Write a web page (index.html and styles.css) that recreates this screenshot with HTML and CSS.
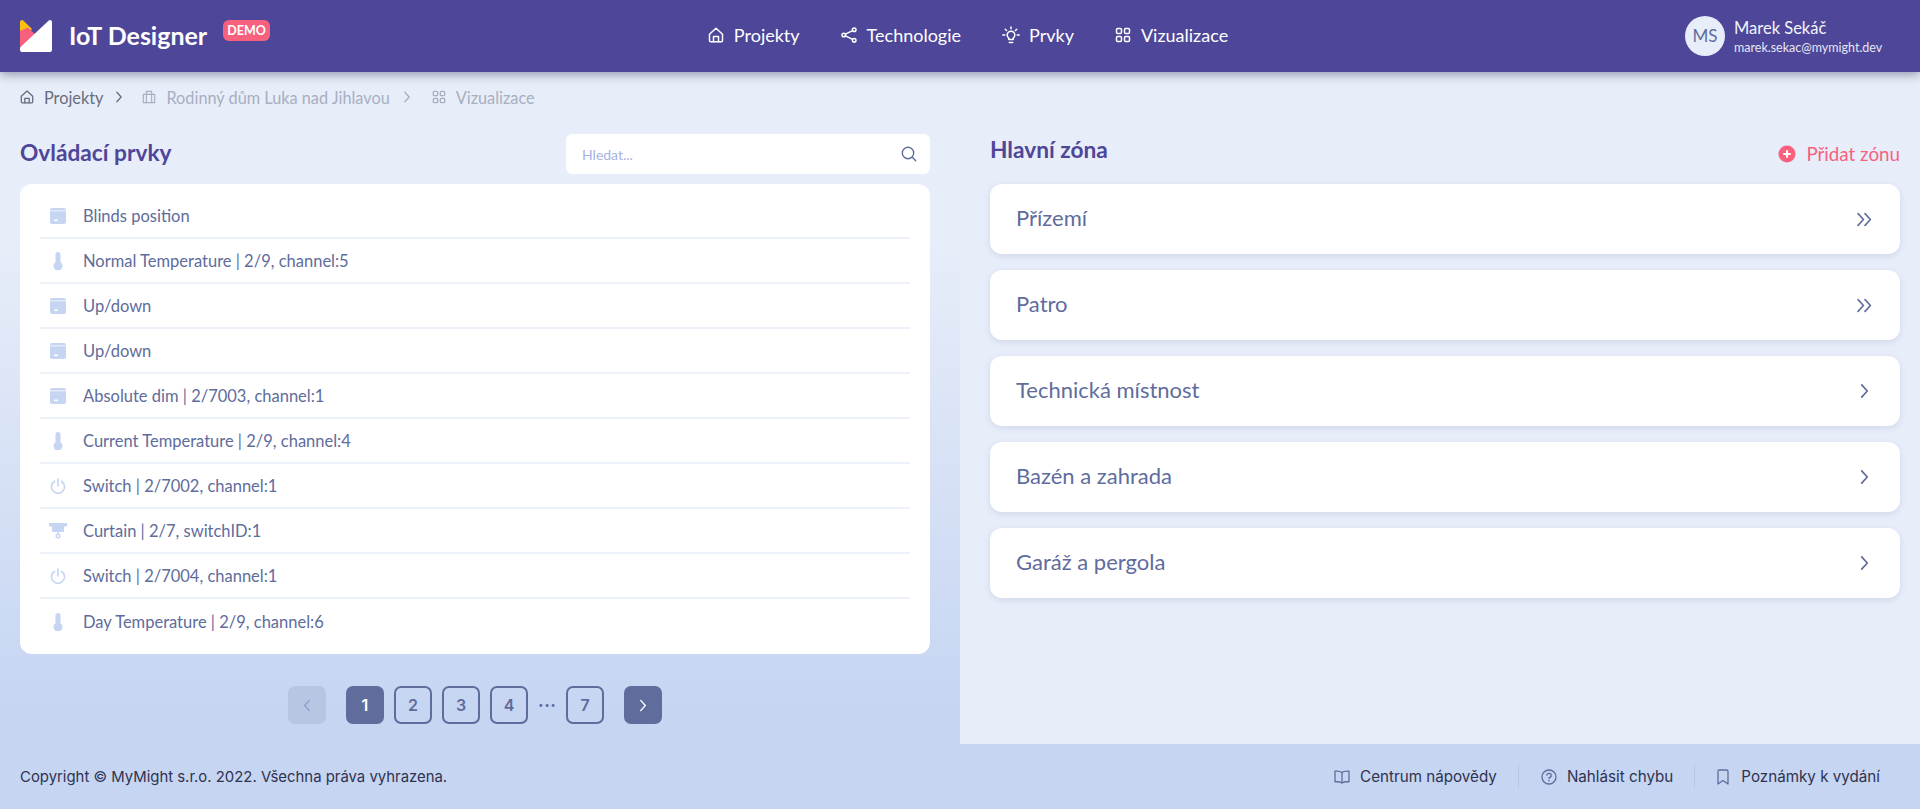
FILE: index.html
```html
<!DOCTYPE html>
<html lang="cs">

<head>
    <meta charset="UTF-8" />
    <meta name="viewport" content="width=device-width, initial-scale=1.0" />
    <title>IoT Designer</title>
    <link rel="stylesheet" href="styles.css">
</head>

<body>
    <svg class="icon-defs" width="0" height="0">
        <symbol id="i-home" viewBox="0 0 16 16">
            <path d="M1.500 7.200 8 1.200l6.500 6v6.300a1.300 1.300 0 0 1-1.300 1.300H2.800a1.300 1.300 0 0 1-1.300-1.300z" />
            <path d="M5.500 14.800V9.500h5v5.300" />
        </symbol>
        <symbol id="i-grid" viewBox="0 0 16 16">
            <rect x="1.500" y="1.500" width="5" height="5" rx="1.200" />
            <rect x="9.500" y="1.500" width="5" height="5" rx="1.200" />
            <rect x="1.500" y="9.500" width="5" height="5" rx="1.200" />
            <rect x="9.500" y="9.500" width="5" height="5" rx="1.200" />
        </symbol>
        <symbol id="i-share" viewBox="0 0 16 16">
            <circle cx="2.800" cy="8" r="1.800" />
            <circle cx="13.200" cy="2.800" r="1.800" />
            <circle cx="13.200" cy="13.200" r="1.800" />
            <path d="M4.400 7.200 11.600 3.600M4.400 8.800l7.200 3.600" />
        </symbol>
        <symbol id="i-bulb" viewBox="0 0 18 18">
            <path d="M6.800 12.200C5.800 11.400 5.200 10.300 5.200 9a3.800 3.800 0 0 1 7.600 0c0 1.300-.6 2.400-1.600 3.200v1.300H6.800z" />
            <path d="M7.300 16.500h3.400M9 1v1.800M3.300 3.300l1.200 1.200M14.700 3.300l-1.200 1.200M.8 9h2M15.200 9h2" />
        </symbol>
        <symbol id="i-chevron" viewBox="0 0 8 14">
            <path d="m1.500 1.500 5 5.500-5 5.500" />
        </symbol>
        <symbol id="i-double" viewBox="0 0 14 14">
            <path d="m1 1.500 5 5.500-5 5.500M7.500 1.500l5 5.500-5 5.500" />
        </symbol>
        <symbol id="i-window" viewBox="0 0 16 16">
            <path class="fill" fill-rule="evenodd" d="M2 0h12a2 2 0 0 1 2 2v12a2 2 0 0 1-2 2H2a2 2 0 0 1-2-2V2a2 2 0 0 1 2-2zM0 2.500v.8h16v-.8zM4 11.500v1.500h4v-1.500z" />
        </symbol>
        <symbol id="i-thermo" viewBox="0 0 10 18">
            <path class="fill" d="M2.500 2.500a2.500 2.500 0 0 1 5 0v7.700a4.500 4.500 0 1 1-5 0z" />
        </symbol>
        <symbol id="i-power" viewBox="0 0 16 16">
            <path class="thick" d="M4.600 3.300a6.500 6.500 0 1 0 6.800 0M8 1v7" />
        </symbol>
        <symbol id="i-curtain" viewBox="0 0 18 16">
            <path class="fill" d="M0 0h18v3.500h-3V9H3V3.500H0z" />
            <path class="line" d="M9 9v2" />
            <circle class="line" cx="9" cy="13" r="1.800" />
        </symbol>
    </svg>

    <header class="topbar">
        <div class="brand">
            <svg class="logo" viewBox="0 0 32 32">
                <path d="M0 2a2 2 0 0 1 3.300-1.400L12 9 0 21z" fill="#fdc010" />
                <path d="M0 11 8 7.500 17 16 0 27z" fill="#f8617e" />
                <path d="M30 0a2 2 0 0 1 2 2v28a2 2 0 0 1-2 2H2a2 2 0 0 1-2-2v-2.500L28.500.7A2 2 0 0 1 30 0z" fill="#fff" />
            </svg>
            <span class="brand-name">IoT Designer</span>
            <span class="badge">DEMO</span>
        </div>
        <nav class="nav">
            <a class="nav-item"><svg class="icon"><use href="#i-home" /></svg>Projekty</a>
            <a class="nav-item"><svg class="icon"><use href="#i-share" /></svg>Technologie</a>
            <a class="nav-item"><svg class="icon icon-bulb"><use href="#i-bulb" /></svg>Prvky</a>
            <a class="nav-item"><svg class="icon"><use href="#i-grid" /></svg>Vizualizace</a>
        </nav>
        <div class="user">
            <div class="avatar">MS</div>
            <div>
                <div class="user-name">Marek Sekáč</div>
                <div class="user-mail">marek.sekac@mymight.dev</div>
            </div>
        </div>
    </header>

    <div class="content">
        <section class="left">
            <div class="breadcrumb">
                <span class="crumb crumb-active"><svg class="icon-sm"><use href="#i-home" /></svg>Projekty</span>
                <svg class="crumb-sep crumb-sep-active"><use href="#i-chevron" /></svg>
                <span class="crumb">
                    <svg class="icon-sm" viewBox="0 0 16 16">
                        <path d="M1.500 5h13v9.500h-13zM5 5V1.500h6V5M5 5v9.500M11 5v9.500" />
                    </svg>Rodinný dům Luka nad Jihlavou</span>
                <svg class="crumb-sep crumb-sep-last"><use href="#i-chevron" /></svg>
                <span class="crumb"><svg class="icon-sm"><use href="#i-grid" /></svg>Vizualizace</span>
            </div>

            <div class="list-head">
                <h2 class="title title-list">Ovládací prvky</h2>
                <div class="search">
                    <span>Hledat...</span>
                    <svg viewBox="0 0 16 16" class="search-icon">
                        <circle cx="7" cy="7" r="5.700" />
                        <path d="m11.300 11.300 3.400 3.400" />
                    </svg>
                </div>
            </div>

            <ul class="controls">
                <li><span class="ctrl-icon"><svg class="i-window"><use href="#i-window" /></svg></span>Blinds position</li>
                <li><span class="ctrl-icon"><svg class="i-thermo"><use href="#i-thermo" /></svg></span>Normal Temperature | 2/9, channel:5</li>
                <li><span class="ctrl-icon"><svg class="i-window"><use href="#i-window" /></svg></span>Up/down</li>
                <li><span class="ctrl-icon"><svg class="i-window"><use href="#i-window" /></svg></span>Up/down</li>
                <li><span class="ctrl-icon"><svg class="i-window"><use href="#i-window" /></svg></span>Absolute dim | 2/7003, channel:1</li>
                <li><span class="ctrl-icon"><svg class="i-thermo"><use href="#i-thermo" /></svg></span>Current Temperature | 2/9, channel:4</li>
                <li><span class="ctrl-icon"><svg class="i-power"><use href="#i-power" /></svg></span>Switch | 2/7002, channel:1</li>
                <li><span class="ctrl-icon"><svg class="i-curtain"><use href="#i-curtain" /></svg></span>Curtain | 2/7, switchID:1</li>
                <li><span class="ctrl-icon"><svg class="i-power"><use href="#i-power" /></svg></span>Switch | 2/7004, channel:1</li>
                <li><span class="ctrl-icon"><svg class="i-thermo"><use href="#i-thermo" /></svg></span>Day Temperature | 2/9, channel:6</li>
            </ul>

            <div class="pager">
                <span class="page page-disabled"><svg class="page-arrow"><use href="#i-chevron" /></svg></span>
                <div class="pages">
                    <span class="page page-on">1</span>
                    <span class="page">2</span>
                    <span class="page">3</span>
                    <span class="page">4</span>
                    <span class="dots">...</span>
                    <span class="page">7</span>
                </div>
                <span class="page page-on"><svg class="page-arrow"><use href="#i-chevron" /></svg></span>
            </div>
        </section>

        <section class="right">
            <div class="zone-head">
                <h2 class="title title-zone">Hlavní zóna</h2>
                <a class="add-zone">
                    <svg class="add-icon" viewBox="0 0 18 18">
                        <circle cx="9" cy="9" r="8.500" fill="#f8617e" />
                        <path d="M9 6v6M6 9h6" stroke="#fff" stroke-width="2" stroke-linecap="round" />
                    </svg>Přidat zónu</a>
            </div>
            <div class="zone"><span class="zone-name">Přízemí</span><svg class="zone-double"><use href="#i-double" /></svg></div>
            <div class="zone"><span class="zone-name">Patro</span><svg class="zone-double"><use href="#i-double" /></svg></div>
            <div class="zone"><span class="zone-name">Technická místnost</span><svg class="zone-arrow"><use href="#i-chevron" /></svg></div>
            <div class="zone"><span class="zone-name">Bazén a zahrada</span><svg class="zone-arrow"><use href="#i-chevron" /></svg></div>
            <div class="zone"><span class="zone-name">Garáž a pergola</span><svg class="zone-arrow"><use href="#i-chevron" /></svg></div>
        </section>
    </div>

    <footer class="footer">
        <span>Copyright © MyMight s.r.o. 2022. Všechna práva vyhrazena.</span>
        <div class="foot-links">
            <a class="foot-link">
                <svg class="foot-icon" viewBox="0 0 16 14">
                    <path d="M8 2.500C6.500 1.300 4 1 1 1.200v10.600c3-.2 5.500.1 7 1.200 1.500-1.100 4-1.400 7-1.200V1.200C12 1 9.500 1.300 8 2.500zM8 2.500V13" />
                </svg>Centrum nápovědy</a>
            <a class="foot-link">
                <svg class="foot-icon" viewBox="0 0 16 16">
                    <circle cx="8" cy="8" r="7" />
                    <path d="M5.800 6.200A2.200 2.200 0 1 1 8 8.700v.9M8 11.300v.7" />
                </svg>Nahlásit chybu</a>
            <a class="foot-link">
                <svg class="foot-icon foot-icon-mark" viewBox="0 0 12 16">
                    <path d="M1 2.200A1.200 1.200 0 0 1 2.200 1h7.600A1.200 1.200 0 0 1 11 2.200V15l-5-3.500L1 15z" />
                </svg>Poznámky k vydání</a>
        </div>
    </footer>
</body>

</html>
```
FILE: styles.css
```css
* {
    box-sizing: border-box;
    margin: 0;
    padding: 0;
}

body {
    font-family: "Lato", "Noto Sans", sans-serif;
    height: 100vh;
    display: flex;
    flex-direction: column;
    background: #e7edf9;
    color: #606c9c;
    overflow: hidden;
}

.icon-defs {
    position: absolute;
}

symbol path,
symbol rect,
symbol circle {
    fill: none;
    stroke: currentColor;
    stroke-width: 1.500;
    stroke-linecap: round;
    stroke-linejoin: round;
}

symbol .fill {
    fill: #c6d5f2;
    stroke: none;
}

symbol .line {
    stroke: #c6d5f2;
    stroke-width: 1.400;
}

symbol .thick {
    stroke: #c6d5f2;
    stroke-width: 1.600;
}

/* header */
.topbar {
    height: 72px;
    flex-shrink: 0;
    display: grid;
    grid-template-columns: 1fr auto 1fr;
    align-items: center;
    padding: 0 20px;
    background: #4e4698;
    color: #fff;
    box-shadow: 0 2px 10px rgba(30, 30, 70, 0.45);
    position: relative;
    z-index: 2;
}

.brand {
    display: flex;
    align-items: center;
}

.logo {
    width: 32px;
    height: 32px;
}

.brand-name {
    margin-left: 17px;
    margin-top: -2px;
    font-size: 25px;
    font-weight: 700;
}

.badge {
    align-self: flex-start;
    margin: 0 0 0 16px;
    padding: 0 4px;
    height: 21px;
    line-height: 21px;
    border-radius: 6px;
    background: #f8617e;
    font-size: 12.500px;
    font-weight: 700;
}

.nav {
    display: flex;
    gap: 41px;
    margin-left: 16px;
    margin-top: -2px;
}

.nav-item {
    display: flex;
    align-items: center;
    gap: 10px;
    font-size: 18px;
}

.icon {
    width: 16px;
    height: 16px;
}

.icon-bulb {
    width: 18px;
    height: 18px;
    margin-right: -1px;
}

.user {
    justify-self: end;
    display: flex;
    align-items: center;
    gap: 9px;
    width: 215px;
}

.avatar {
    width: 40px;
    height: 40px;
    border-radius: 50%;
    background: #e7edf9;
    color: #606c9c;
    font-size: 17px;
    text-align: center;
    line-height: 40px;
}

.user-name {
    font-size: 16.500px;
    line-height: 24px;
    color: #f2f4fc;
}

.user-mail {
    margin-top: -1px;
    font-size: 12.500px;
    line-height: 18px;
    color: #e4e6f6;
}

/* main */
.content {
    flex: 1;
    display: grid;
    grid-template-columns: 960px 960px;
    min-height: 0;
    background: linear-gradient(to bottom, #e7edf9 25%, #c6d5f2 95%);
}

.left {
    padding: 0 30px 0 20px;
}

.right {
    padding: 0 20px 0 30px;
    background: #e7edf9;
}

.breadcrumb {
    height: 50px;
    margin-bottom: 12px;
    display: flex;
    align-items: center;
    font-size: 16.300px;
    color: #a8afc2;
}

.crumb {
    display: flex;
    align-items: center;
    gap: 10px;
}

.crumb-active {
    color: #686e80;
}

.icon-sm {
    width: 14px;
    height: 14px;
    fill: none;
    stroke: currentColor;
    stroke-width: 1.300;
    stroke-linejoin: round;
}

.crumb-sep {
    width: 8px;
    height: 12px;
    margin: 0 19px 0 12px;
    color: #a8afc2;
}

.crumb-sep-active {
    color: #686e80;
}

.crumb-sep-last {
    margin: 0 21px 0 13px;
}

.list-head {
    display: flex;
    justify-content: space-between;
    align-items: center;
    height: 40px;
}

.title {
    font-size: 22.700px;
    font-weight: 700;
    color: #4e4698;
}

.title-list {
    margin-top: -3px;
}

.search {
    width: 364px;
    height: 40px;
    padding: 0 13px 0 16px;
    display: flex;
    justify-content: space-between;
    align-items: center;
    background: #fff;
    border-radius: 6px;
    font-size: 14px;
    color: #a7b2e0;
}

.search-icon {
    width: 16px;
    height: 16px;
    fill: none;
    stroke: #606c9c;
    stroke-width: 1.400;
    stroke-linecap: round;
}

.controls {
    list-style: none;
    height: 470px;
    margin-top: 10px;
    padding: 10px 20px 0;
    background: #fff;
    border-radius: 12px;
}

.controls li {
    height: 45px;
    display: flex;
    align-items: center;
    border-bottom: 2px solid #edf1fa;
    font-size: 16.500px;
}

.controls li:last-child {
    border-bottom: none;
}

.ctrl-icon {
    width: 43px;
    padding-left: 10px;
    display: flex;
    justify-content: flex-start;
}

.i-window {
    width: 16px;
    height: 16px;
}

.i-thermo {
    width: 10px;
    height: 18px;
    margin-left: 3px;
}

.i-power {
    width: 16px;
    height: 16px;
}

.i-curtain {
    width: 18px;
    height: 16px;
    margin-left: -1px;
}

.pager {
    margin-top: 32px;
    display: flex;
    justify-content: center;
    gap: 20px;
    padding-left: 20px;
    margin-right: 20px;
}

.pages {
    display: flex;
    align-items: center;
    gap: 10px;
}

.page {
    width: 38px;
    height: 38px;
    display: flex;
    align-items: center;
    justify-content: center;
    border: 2px solid #606c9c;
    border-radius: 7px;
    font-family: "Inter", sans-serif;
    font-size: 16px;
    font-weight: 600;
    color: #606c9c;
}

.page-on {
    background: #606c9c;
    color: #fff;
}

.page-disabled {
    background: #b8c6e4;
    border-color: #b8c6e4;
    color: #8f9dc8;
}

.page-disabled .page-arrow {
    transform: scaleX(-1);
}

.page-arrow {
    width: 8px;
    height: 13px;
}

.dots {
    width: 18px;
    margin-top: -8px;
    text-align: center;
    font-family: "Inter", sans-serif;
    font-size: 16px;
    font-weight: 800;
    letter-spacing: 0.5px;
}

.zone-head {
    height: 112px;
    display: flex;
    justify-content: space-between;
    align-items: flex-start;
}

.title-zone {
    margin-top: 64px;
}

.add-zone {
    margin-top: 70px;
    display: flex;
    align-items: center;
    gap: 10px;
    font-size: 18.800px;
    color: #f8617e;
}

.add-icon {
    width: 18px;
    height: 18px;
}

.zone {
    height: 70px;
    margin-bottom: 16px;
    padding: 0 28px 0 26px;
    display: flex;
    justify-content: space-between;
    align-items: center;
    background: #fff;
    border-radius: 12px;
    box-shadow: 0 2px 6px rgba(96, 108, 156, 0.16);
    font-size: 22px;
}

.zone-name {
    margin-top: -4px;
}

.zone-double {
    width: 15px;
    height: 15px;
}

.zone-arrow {
    width: 9px;
    height: 16px;
    margin-right: 3px;
}

/* footer */
.footer {
    height: 65px;
    flex-shrink: 0;
    padding: 0 40px 0 20px;
    display: flex;
    justify-content: space-between;
    align-items: center;
    background: #c6d5f2;
    font-family: "Inter", sans-serif;
    font-size: 14.900px;
    color: #2f3350;
}

.foot-links {
    display: flex;
    align-items: center;
    font-size: 15.200px;
}

.foot-link {
    display: flex;
    align-items: center;
    gap: 10px;
    height: 23px;
    padding: 0 21px 0 22px;
    border-left: 1px solid #b8c6e4;
}

.foot-link:first-child {
    border-left: none;
}

.foot-link:last-child {
    padding-right: 0;
}

.foot-icon {
    width: 16px;
    height: 16px;
    fill: none;
    stroke: #606c9c;
    stroke-width: 1.300;
    stroke-linecap: round;
    stroke-linejoin: round;
}

.foot-icon-mark {
    width: 12px;
    margin-right: 2px;
}
```
